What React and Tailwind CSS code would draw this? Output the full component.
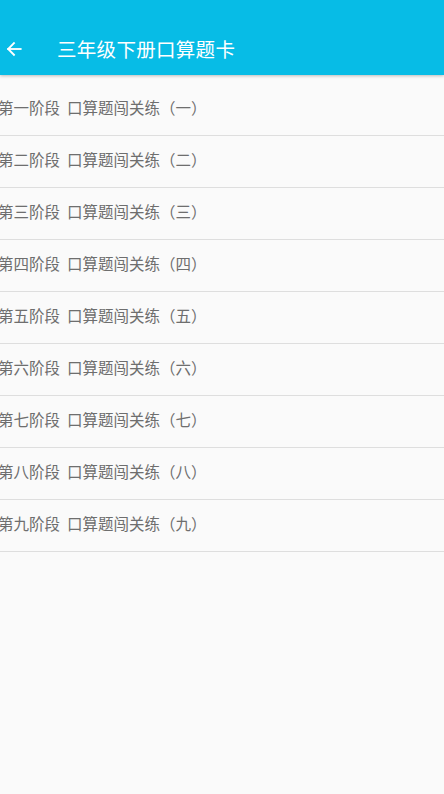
import React from "react";

const stages = ["一", "二", "三", "四", "五", "六", "七", "八", "九"];

const App = () => {
  return (
    <div
      className="min-h-[794px] bg-[#fafafa]"
      style={{ fontFamily: '"Noto Sans CJK SC", "Noto Sans", sans-serif' }}
    >
      {/* Toolbar (with status bar area on top) */}
      <header className="h-[75px] pt-[23px] bg-[#07bce6] flex items-center shadow-[0_1px_3px_rgba(0,0,0,0.25)] relative z-10">
        <button className="w-[28px] h-[28px] flex items-center justify-center text-white">
          <svg width="20" height="20" viewBox="0 0 24 24" fill="none" stroke="currentColor" strokeWidth="2.2" strokeLinecap="square">
            <path d="M20 12H5" />
            <path d="M12 5l-7 7 7 7" />
          </svg>
        </button>
        <h1 className="ml-[29px] text-white text-[19.5px] tracking-[0.3px]">三年级下册口算题卡</h1>
      </header>

      {/* Stage list */}
      <ul className="pt-[9px]">
        {stages.map((n) => (
          <li
            key={n}
            className="h-[52px] border-b border-[#dedede] pt-[12px] -ml-[2px] text-[15.5px] text-[#6e6e6e] leading-[22px] whitespace-nowrap"
          >
            第{n}阶段&nbsp;&nbsp;口算题闯关练（{n}）
          </li>
        ))}
      </ul>
    </div>
  );
};

export default App;
